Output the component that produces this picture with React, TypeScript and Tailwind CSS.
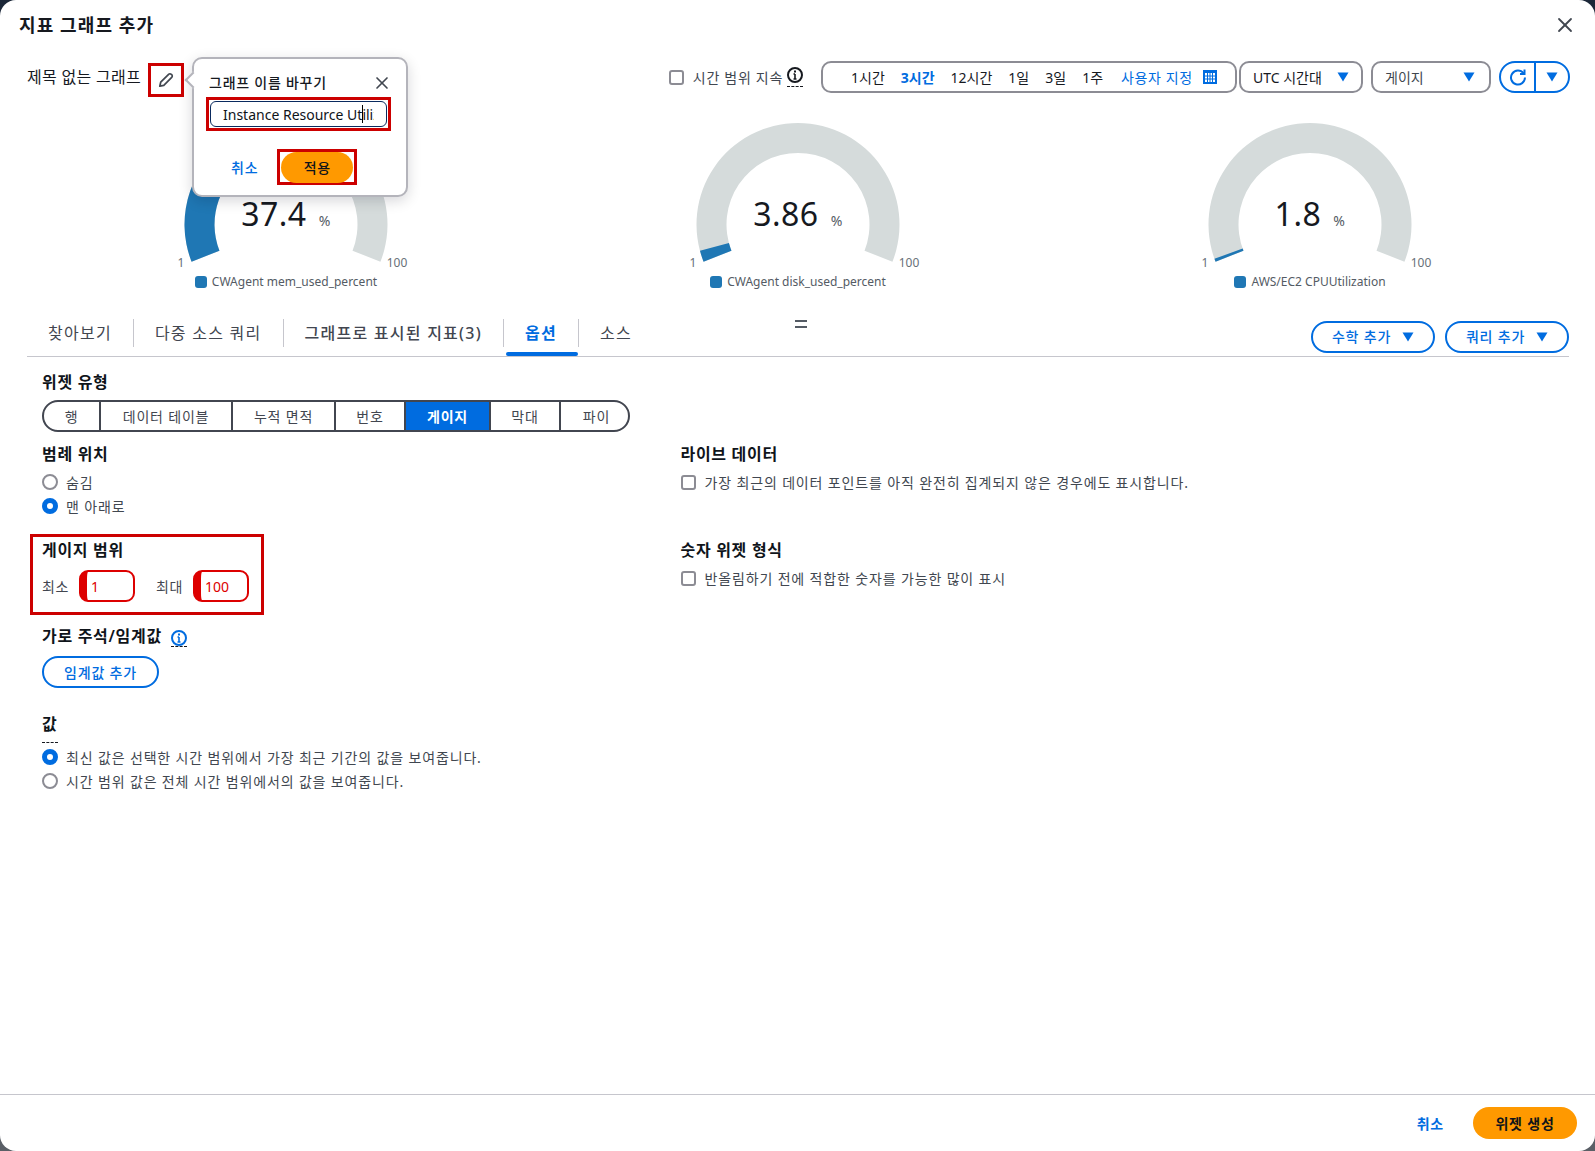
import { X } from 'lucide-react'

const FONT = '[font-family:"Noto_Sans","Noto_Sans_CJK_KR",sans-serif]'

const polar = (r: number, deg: number) => {
  const t = (deg * Math.PI) / 180
  return `${(256 + r * Math.cos(t)).toFixed(2)} ${(114.5 - r * Math.sin(t)).toFixed(2)}`
}

const sector = (from: number, to: number) => {
  const large = Math.abs(from - to) > 180 ? 1 : 0
  return `M${polar(101.5, from)} A101.5 101.5 0 ${large} 1 ${polar(101.5, to)} L${polar(71.5, to)} A71.5 71.5 0 ${large} 0 ${polar(71.5, from)} Z`
}

function Gauge({ value, pct, legend }: { value: string; pct: number; legend: string }) {
  const start = 201.5
  const end = -21.5
  const at = start - (start - end) * pct
  return (
    <div className="flex flex-col items-center">
      <svg width="512" height="165" viewBox="0 0 512 165">
        <path d={sector(start, end)} fill="#d5dbdb" />
        <path d={sector(start, at)} fill="#1f77b4" />
        <text x="256" y="116" textAnchor="middle" fill="#16191f" fontSize="32" letterSpacing="0.5">
          {value}
          <tspan dx="12" fontSize="14" fill="#545b64">%</tspan>
        </text>
        <text x="151" y="157" textAnchor="middle" fill="#687078" fontSize="12">1</text>
        <text x="367" y="157" textAnchor="middle" fill="#687078" fontSize="12">100</text>
      </svg>
      <div className="flex h-[14px] items-center gap-[5px] text-[12px] text-[#545b64]">
        <span className="h-3 w-3 rounded-[3px] bg-[#1f77b4]" />
        {legend}
      </div>
    </div>
  )
}

function Caret({ className = '' }: { className?: string }) {
  return (
    <svg width="12" height="10" viewBox="0 0 12 10" className={className}>
      <path d="M0.5 0.5h11L6 9.5z" fill="#006ce0" />
    </svg>
  )
}

function Info({ color }: { color: string }) {
  return (
    <svg width="16" height="16" viewBox="0 0 16 16" fill="none" stroke={color} strokeWidth="2">
      <circle cx="8" cy="8" r="7" />
      <path d="M8 7v5M6.5 12h3M6.5 7H8" strokeWidth="1.6" />
      <path d="M8 3.5v2" strokeWidth="2" />
    </svg>
  )
}

function Radio({ on, label }: { on?: boolean; label: string }) {
  return (
    <div className="flex h-6 items-center gap-2 text-[14px] tracking-[0.85px] text-[#414750]">
      <span
        className={
          on
            ? 'h-4 w-4 rounded-full border-[5px] border-[#006ce0] bg-white'
            : 'h-4 w-4 rounded-full border-2 border-[#8c8c94] bg-white'
        }
      />
      {label}
    </div>
  )
}

function Check({ label }: { label: string }) {
  return (
    <div className="flex h-6 items-center gap-[9px] text-[14px] tracking-[0.85px] text-[#414750]">
      <span className="h-[15px] w-[15px] rounded-[3px] border-2 border-[#8c8c94] bg-white" />
      {label}
    </div>
  )
}

function Heading({ children }: { children: React.ReactNode }) {
  return <h3 className="h-[22px] text-[16px] leading-[22px] font-semibold tracking-[0.7px] text-[#0f141a]">{children}</h3>
}

const tabs = ['찾아보기', '다중 소스 쿼리', '그래프로 표시된 지표(3)', '옵션', '소스']
const ranges = ['1시간', '3시간', '12시간', '1일', '3일', '1주']
const widgetTypes: [string, number][] = [
  ['행', 57],
  ['데이터 테이블', 132],
  ['누적 면적', 103],
  ['번호', 70],
  ['게이지', 85],
  ['막대', 70],
  ['파이', 71],
]

export default function App() {
  return (
    <div className={`h-[1151px] w-full overflow-hidden bg-gradient-to-b from-[#1b2738] to-[#5a5f66] ${FONT}`}>
      <div className="flex h-full flex-col rounded-[16px] bg-white">
        <header className="flex h-[50px] items-center justify-between pr-[18px] pl-[19px]">
          <h2 className="text-[18px] font-semibold tracking-[1.1px] text-[#16191f]">지표 그래프 추가</h2>
          <X size={24} strokeWidth={1.8} className="text-[#414750]" />
        </header>

        <div className="relative mt-[11px] flex h-8 items-center pr-[25px] pl-[27px]">
          <span className="text-[16px] tracking-[0.3px] text-[#16191f]">제목 없는 그래프</span>
          <span className="ml-auto flex items-center">
            <span className="h-[15px] w-[15px] rounded-[3px] border-2 border-[#8c8c94]" />
            <span className="ml-[9px] text-[14px] tracking-[0.7px] text-[#414750]">시간 범위 지속</span>
            <span className="mr-[18px] ml-[4px] border-b border-dashed border-[#16191f] pb-[3px]">
              <Info color="#16191f" />
            </span>
          </span>
          <div className="flex h-8 w-[416px] items-center rounded-[10px] border-2 border-[#8c8c94] pl-[28px] text-[14px] text-[#16191f]">
            {ranges.map((r) => (
              <span
                key={r}
                className={r === '3시간' ? 'mr-[16px] font-bold text-[#006ce0]' : 'mr-[16px]'}
              >
                {r}
              </span>
            ))}
            <span className="ml-[2px] tracking-[0.6px] text-[#006ce0]">사용자 지정</span>
            <svg width="14" height="14" viewBox="0 0 14 14" className="ml-[10px]">
              <rect width="14" height="14" fill="#006ce0" />
              <path d="M2 3h10v9H2z" fill="#fff" />
              <path d="M4.5 3v9M7 3v9M9.5 3v9M2 6h10M2 9h10" stroke="#006ce0" strokeWidth="1" />
            </svg>
          </div>
          <div className="ml-[2px] flex h-8 w-[124px] items-center justify-between rounded-[10px] border-2 border-[#8c8c94] pr-[12px] pl-[12px] text-[14px] text-[#16191f]">
            UTC 시간대
            <Caret />
          </div>
          <div className="ml-[8px] flex h-8 w-[120px] items-center justify-between rounded-[10px] border-2 border-[#8c8c94] pr-[14px] pl-[12px] text-[14px] text-[#414750]">
            게이지
            <Caret />
          </div>
          <div className="ml-[8px] flex h-8 w-[71px] items-center rounded-full border-2 border-[#006ce0]">
            <span className="flex w-[35px] justify-center border-r-2 border-[#006ce0] py-[5px]">
              <svg width="18" height="18" viewBox="0 0 18 18" fill="none" stroke="#006ce0" strokeWidth="2">
                <path d="M14.5 5.2A7 7 0 1 0 16 9.5" />
                <path d="M15.5 1.5v4.5h-4.5" />
              </svg>
            </span>
            <span className="flex flex-1 justify-center">
              <Caret />
            </span>
          </div>

          {/* edit button and rename popover sit over the first gauge */}
          <span className="absolute top-[2px] left-[148px] flex h-[34px] w-[36px] items-center justify-center border-[3px] border-[#cc0000] bg-white">
            <svg width="16" height="16" viewBox="0 0 16 16" fill="none" stroke="#414750" strokeWidth="1.7" strokeLinejoin="round">
              <path d="M1.8 14.2l.9-4L10.6 2.3a1.9 1.9 0 0 1 2.7 0l.4.4a1.9 1.9 0 0 1 0 2.7L5.8 13.3z" />
            </svg>
          </span>
          <div className="absolute top-[-4px] left-[192px] z-10 h-[140px] w-[216px] rounded-[10px] border-2 border-[#b4b4bb] bg-white shadow-[0_4px_14px_rgba(0,7,22,0.16)]">
            <span className="absolute top-[15px] left-[-7px] h-3 w-3 rotate-45 border-b-2 border-l-2 border-[#b4b4bb] bg-white" />
            <div className="flex h-[37px] items-end justify-between pr-[14px] pb-[2px] pl-[15px]">
              <span className="text-[14px] leading-[22px] font-medium tracking-[0.75px] text-[#16191f]">그래프 이름 바꾸기</span>
              <X size={20} strokeWidth={2} className="mb-[1px] text-[#414750]" />
            </div>
            <div className="relative mt-[1px] ml-[12px] h-[34px] w-[185px] border-[3px] border-[#cc0000] p-[1px]">
              <input
                readOnly
                value="Instance Resource Utilization"
                className="h-full w-full rounded-[6px] border border-[#0a2a5e] bg-white pr-[12px] pl-[12px] text-[14px] text-[#0f141a] outline-none"
              />
              <span className="absolute top-[5px] left-[153px] h-[18px] w-px bg-[#000]" />
            </div>
            <div className="mt-[18px] flex items-center pl-[37px]">
              <span className="text-[14px] font-medium tracking-[0.8px] text-[#006ce0]">취소</span>
              <span className="ml-[19px] flex h-[36px] w-[80px] items-center justify-center border-[3px] border-[#cc0000]">
                <span className="flex h-[31px] w-[72px] shrink-0 items-center justify-center rounded-full bg-[#ff9900] text-[14px] font-medium tracking-[0.8px] text-[#0f141a]">
                  적용
                </span>
              </span>
            </div>
          </div>
        </div>

        <div className="mt-[17px] ml-[30px] grid w-[1536px] grid-cols-3">
          <Gauge value="37.4" pct={0.368} legend="CWAgent mem_used_percent" />
          <Gauge value="3.86" pct={0.029} legend="CWAgent disk_used_percent" />
          <Gauge value="1.8" pct={0.008} legend="AWS/EC2 CPUUtilization" />
        </div>

        <div className="relative mt-[21px] mr-[26px] ml-[27px] flex h-[47px] items-center border-b border-[#c6c6cd]">
          {tabs.map((t, i) => (
            <div
              key={t}
              className={
                i < tabs.length - 1
                  ? 'relative flex h-[28px] items-center border-r border-[#c6c6cd] px-[21px]'
                  : 'relative flex h-[28px] items-center px-[21px]'
              }
            >
              <span
                className={
                  t === '옵션'
                    ? 'text-[16px] font-semibold tracking-[1.25px] text-[#006ce0]'
                    : 'text-[16px] tracking-[1.25px] text-[#424650] ' + (i === 2 ? 'font-medium' : '')
                }
              >
                {t}
              </span>
              {t === '옵션' && (
                <span className="absolute right-0 bottom-[-9px] left-[2px] h-1 rounded-t-[2px] rounded-b-[2px] bg-[#006ce0]" />
              )}
            </div>
          ))}
          <div className="absolute top-[10px] left-[768px] flex flex-col gap-1">
            <span className="h-[2px] w-3 bg-[#545b64]" />
            <span className="h-[2px] w-3 bg-[#545b64]" />
          </div>
          <div className="mt-[7px] ml-auto flex gap-[10px]">
            {['수학 추가', '쿼리 추가'].map((b) => (
              <span
                key={b}
                className="flex h-8 w-[124px] items-center justify-center gap-[11px] rounded-full border-2 border-[#006ce0] text-[14px] font-medium tracking-[0.8px] text-[#006ce0]"
              >
                {b}
                <Caret />
              </span>
            ))}
          </div>
        </div>

        <div className="pt-[14px] pl-[42px]">
          <Heading>위젯 유형</Heading>
          <div className="mt-[7px] flex h-8 w-[588px] overflow-hidden rounded-full border-2 border-[#424650]">
            {widgetTypes.map(([w, width], i) => (
              <span
                key={w}
                style={{ width }}
                className={
                  (w === '게이지'
                    ? 'bg-[#006ce0] font-semibold text-white '
                    : 'text-[#424650] ') +
                  (i < widgetTypes.length - 1 ? 'border-r-2 border-[#424650] ' : '') +
                  'flex shrink-0 items-center justify-center text-[14px] tracking-[0.8px]'
                }
              >
                {w}
              </span>
            ))}
          </div>

          <div className="mt-[11px] grid grid-cols-[638.5px_1fr] grid-rows-[91px_81px]">
            <div>
              <Heading>범례 위치</Heading>
              <div className="mt-[5px]">
                <Radio label="숨김" />
                <Radio on label="맨 아래로" />
              </div>
            </div>
            <div>
              <Heading>라이브 데이터</Heading>
              <div className="mt-[5px]">
                <Check label="가장 최근의 데이터 포인트를 아직 완전히 집계되지 않은 경우에도 표시합니다." />
              </div>
            </div>
            <div className="-ml-[12.5px] w-[234px] border-[3px] border-[#cc0000] pt-[2px] pl-[9.5px]">
              <Heading>게이지 범위</Heading>
              <div className="mt-[9px] flex items-center text-[14px] tracking-[0.6px] text-[#424650]">
                최소
                <span className="ml-[10px] flex h-8 w-[56px] items-center rounded-[9px] border-2 border-l-[8px] border-[#dd0000] pl-[4px] text-[14px] tracking-normal text-[#dd0000]">
                  1
                </span>
                <span className="ml-[21px]">최대</span>
                <span className="ml-[10px] flex h-8 w-[56px] items-center rounded-[9px] border-2 border-l-[8px] border-[#dd0000] pl-[4px] text-[14px] tracking-normal text-[#dd0000]">
                  100
                </span>
              </div>
            </div>
            <div className="pt-[5px]">
              <Heading>숫자 위젯 형식</Heading>
              <div className="mt-[5px]">
                <Check label="반올림하기 전에 적합한 숫자를 가능한 많이 표시" />
              </div>
            </div>
          </div>

          <div className="mt-[10px] flex items-start gap-[9px]">
            <Heading>가로 주석/임계값</Heading>
            <span className="mt-[5px] h-[17px] border-b border-dashed border-[#16191f]">
              <Info color="#006ce0" />
            </span>
          </div>
          <span className="mt-[9px] flex h-8 w-[117px] items-center justify-center rounded-full border-2 border-[#006ce0] text-[14px] font-medium tracking-[0.8px] text-[#006ce0]">
            임계값 추가
          </span>

          <div className="mt-[25px] w-4 border-b border-dashed border-[#16191f] pb-[7px]">
            <Heading>값</Heading>
          </div>
          <div className="mt-[2px]">
            <Radio on label="최신 값은 선택한 시간 범위에서 가장 최근 기간의 값을 보여줍니다." />
            <Radio label="시간 범위 값은 전체 시간 범위에서의 값을 보여줍니다." />
          </div>
        </div>

        <footer className="mt-auto flex h-[57px] items-center justify-end border-t border-[#c6c6cd] pr-[18px]">
          <span className="text-[14px] font-semibold tracking-[0.8px] text-[#006ce0]">취소</span>
          <span className="ml-[29px] flex h-8 w-[104px] items-center justify-center rounded-full bg-[#ff9900] text-[14px] font-semibold tracking-[0.8px] text-[#0f141a]">
            위젯 생성
          </span>
        </footer>
      </div>
    </div>
  )
}
